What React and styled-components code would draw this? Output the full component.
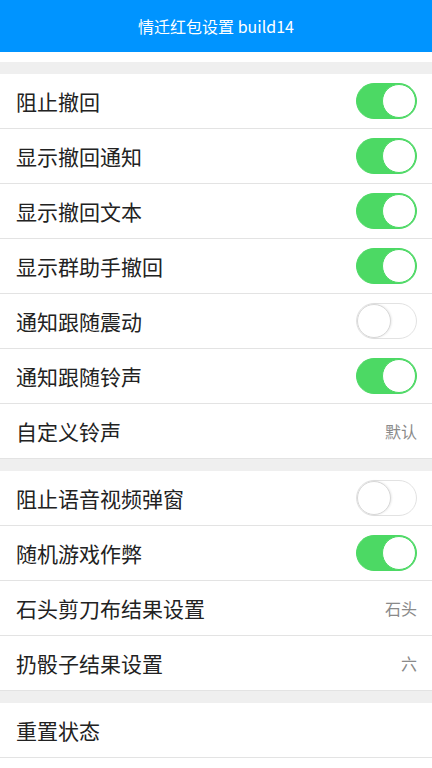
import styled, { createGlobalStyle } from 'styled-components';

const GlobalStyle = createGlobalStyle`
  body {
    margin: 0;
    background: #ffffff;
    font-family: "Noto Sans CJK SC", "Noto Sans", sans-serif;
  }
`;

const SECTIONS = [
  [
    { label: '阻止撤回', on: true },
    { label: '显示撤回通知', on: true },
    { label: '显示撤回文本', on: true },
    { label: '显示群助手撤回', on: true },
    { label: '通知跟随震动', on: false },
    { label: '通知跟随铃声', on: true },
    { label: '自定义铃声', value: '默认' },
  ],
  [
    { label: '阻止语音视频弹窗', on: false },
    { label: '随机游戏作弊', on: true },
    { label: '石头剪刀布结果设置', value: '石头' },
    { label: '扔骰子结果设置', value: '六' },
  ],
  [{ label: '重置状态' }],
];

const App = () => {
  return (
    <Page>
      <GlobalStyle />
      <TitleBar>情迁红包设置 build14</TitleBar>
      <Spacer />
      {SECTIONS.map((rows, i) => (
        <Section key={i}>
          {rows.map((row) => (
            <Row key={row.label}>
              <Label>{row.label}</Label>
              {row.on !== undefined && (
                <Switch $on={row.on}>
                  <Knob $on={row.on} />
                </Switch>
              )}
              {row.value && <Value>{row.value}</Value>}
            </Row>
          ))}
        </Section>
      ))}
    </Page>
  );
};

const Page = styled.div`
  min-height: 768px;
  background: #ffffff;
`;

const TitleBar = styled.header`
  height: 52px;
  display: flex;
  align-items: center;
  justify-content: center;
  background: #0094ff;
  color: #ffffff;
  font-size: 16px;
`;

const Spacer = styled.div`
  height: 10px;
`;

const Section = styled.section`
  border-top: 12px solid #efefef;
`;

const Row = styled.div`
  height: 54px;
  display: flex;
  align-items: center;
  justify-content: space-between;
  padding: 0 15px 0 16px;
  border-bottom: 1px solid #e3e3e3;
`;

const Label = styled.span`
  font-size: 21px;
  color: #222222;
`;

const Value = styled.span`
  font-size: 16px;
  color: #8a8a8a;
`;

const Switch = styled.div`
  box-sizing: border-box;
  width: 61px;
  height: 36px;
  border-radius: 18px;
  display: flex;
  justify-content: ${(p) => (p.$on ? 'flex-end' : 'flex-start')};
  background: ${(p) => (p.$on ? '#4cd964' : '#ffffff')};
  border: 1px solid ${(p) => (p.$on ? '#4cd964' : '#e2e2e2')};
`;

const Knob = styled.div`
  box-sizing: border-box;
  width: 34px;
  height: 34px;
  border-radius: 50%;
  background: #ffffff;
  border: 1px solid ${(p) => (p.$on ? '#4cd964' : '#d8d8d8')};
  box-shadow: ${(p) => (p.$on ? 'none' : '1px 0 2px rgba(0, 0, 0, 0.08)')};
`;

export default App;
